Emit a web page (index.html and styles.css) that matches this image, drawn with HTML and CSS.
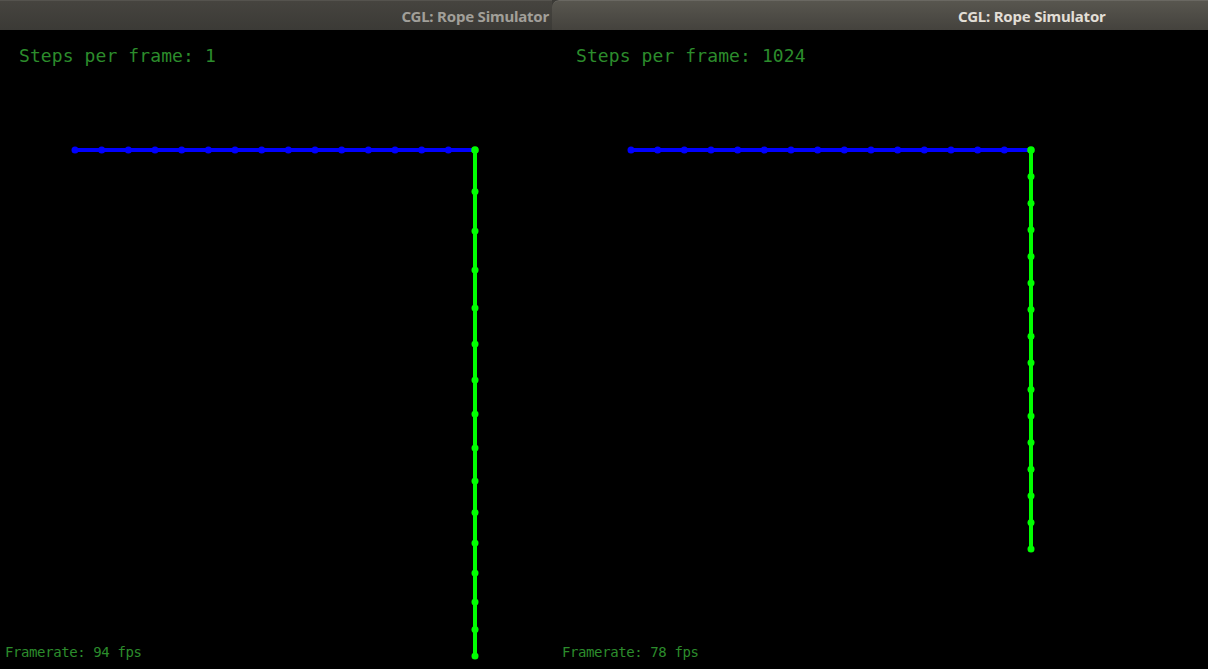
FILE: index.html
```html
<!DOCTYPE html>
<html>
<head>
<meta charset="utf-8">
<title>CGL: Rope Simulator</title>
<link rel="stylesheet" href="styles.css">
</head>
<body>
<div class="desktop">
  <section class="window window-left">
    <header class="titlebar titlebar-inactive"><span class="title">CGL: Rope Simulator</span></header>
    <div class="viewport">
      <svg class="scene" width="552" height="639" viewBox="0 0 552 639">
        <g class="rope-blue">
          <line x1="75" y1="120" x2="475" y2="120"/>
          <circle cx="75" cy="120" r="3.5"/><circle cx="101.67" cy="120" r="3.5"/><circle cx="128.33" cy="120" r="3.5"/><circle cx="155" cy="120" r="3.5"/>
          <circle cx="181.67" cy="120" r="3.5"/><circle cx="208.33" cy="120" r="3.5"/><circle cx="235" cy="120" r="3.5"/><circle cx="261.67" cy="120" r="3.5"/>
          <circle cx="288.33" cy="120" r="3.5"/><circle cx="315" cy="120" r="3.5"/><circle cx="341.67" cy="120" r="3.5"/><circle cx="368.33" cy="120" r="3.5"/>
          <circle cx="395" cy="120" r="3.5"/><circle cx="421.67" cy="120" r="3.5"/><circle cx="448.33" cy="120" r="3.5"/>
        </g>
        <g class="rope-green">
          <line x1="475" y1="120" x2="475" y2="626"/>
          <circle cx="475" cy="120" r="3.8"/><circle cx="475" cy="161.5" r="3.5"/><circle cx="475" cy="201" r="3.5"/><circle cx="475" cy="240" r="3.5"/>
          <circle cx="475" cy="278" r="3.5"/><circle cx="475" cy="314" r="3.5"/><circle cx="475" cy="350" r="3.5"/><circle cx="475" cy="384" r="3.5"/>
          <circle cx="475" cy="418" r="3.5"/><circle cx="475" cy="451" r="3.5"/><circle cx="475" cy="482.5" r="3.5"/><circle cx="475" cy="513" r="3.5"/>
          <circle cx="475" cy="543" r="3.5"/><circle cx="475" cy="572" r="3.5"/><circle cx="475" cy="599.5" r="3.5"/><circle cx="475" cy="626" r="3.5"/>
        </g>
      </svg>
      <div class="hud hud-steps hud-steps-left">Steps per frame: 1</div>
      <div class="hud hud-fps hud-fps-left">Framerate: 94 fps</div>
    </div>
  </section>
  <section class="window window-right">
    <header class="titlebar titlebar-active"><span class="title">CGL: Rope Simulator</span></header>
    <div class="viewport">
      <svg class="scene" width="656" height="639" viewBox="0 0 656 639">
        <g class="rope-blue">
          <line x1="79" y1="120" x2="479" y2="120"/>
          <circle cx="79" cy="120" r="3.5"/><circle cx="105.67" cy="120" r="3.5"/><circle cx="132.33" cy="120" r="3.5"/><circle cx="159" cy="120" r="3.5"/>
          <circle cx="185.67" cy="120" r="3.5"/><circle cx="212.33" cy="120" r="3.5"/><circle cx="239" cy="120" r="3.5"/><circle cx="265.67" cy="120" r="3.5"/>
          <circle cx="292.33" cy="120" r="3.5"/><circle cx="319" cy="120" r="3.5"/><circle cx="345.67" cy="120" r="3.5"/><circle cx="372.33" cy="120" r="3.5"/>
          <circle cx="399" cy="120" r="3.5"/><circle cx="425.67" cy="120" r="3.5"/><circle cx="452.33" cy="120" r="3.5"/>
        </g>
        <g class="rope-green">
          <line x1="479" y1="120" x2="479" y2="519"/>
          <circle cx="479" cy="120" r="3.8"/><circle cx="479" cy="146.6" r="3.5"/><circle cx="479" cy="173.2" r="3.5"/><circle cx="479" cy="199.8" r="3.5"/>
          <circle cx="479" cy="226.4" r="3.5"/><circle cx="479" cy="253" r="3.5"/><circle cx="479" cy="279.6" r="3.5"/><circle cx="479" cy="306.2" r="3.5"/>
          <circle cx="479" cy="332.8" r="3.5"/><circle cx="479" cy="359.4" r="3.5"/><circle cx="479" cy="386" r="3.5"/><circle cx="479" cy="412.6" r="3.5"/>
          <circle cx="479" cy="439.2" r="3.5"/><circle cx="479" cy="465.8" r="3.5"/><circle cx="479" cy="492.4" r="3.5"/><circle cx="479" cy="519" r="3.5"/>
        </g>
      </svg>
      <div class="hud hud-steps hud-steps-right">Steps per frame: 1024</div>
      <div class="hud hud-fps hud-fps-right">Framerate: 78 fps</div>
    </div>
  </section>
</div>
</body>
</html>
```
FILE: styles.css
```css
html, body {
  margin: 0;
  padding: 0;
  background: #000;
  width: 1208px;
  height: 669px;
  overflow: hidden;
}

.desktop {
  display: flex;
  width: 1208px;
  height: 669px;
  background: #3c3b37;
}

.window {
  display: flex;
  flex-direction: column;
  height: 669px;
  overflow: hidden;
}

.window-left {
  width: 552px;
  flex: none;
}

.window-right {
  flex: 1;
  border-top-left-radius: 7px;
}

.titlebar {
  height: 30px;
  flex: none;
  display: flex;
  align-items: center;
  box-sizing: border-box;
  font-family: "Noto Sans", "DejaVu Sans", sans-serif;
  font-weight: bold;
  font-size: 15px;
  white-space: nowrap;
}

.titlebar-inactive {
  justify-content: flex-end;
  padding-right: 3px;
  background: linear-gradient(#46443f, #3b3a36);
  border-top: 1px solid #55534e;
  color: #a19f99;
}

.titlebar-active {
  justify-content: flex-start;
  padding-left: 406px;
  background: linear-gradient(#58564f, #44423d);
  border-top: 1px solid #6a6862;
  border-top-left-radius: 7px;
  color: #e2ded6;
}

.title {
  letter-spacing: -0.2px;
}

.viewport {
  position: relative;
  flex: 1;
  display: flex;
  flex-direction: column;
  background: #000;
}

.scene {
  position: absolute;
  left: 0;
  top: 0;
}

.rope-blue line {
  stroke: #0000ff;
  stroke-width: 4;
}

.rope-blue circle {
  fill: #0000ff;
}

.rope-green line {
  stroke: #00ff00;
  stroke-width: 4;
}

.rope-green circle {
  fill: #00ff00;
}

.hud {
  position: relative;
  color: #2c8c2c;
  font-family: "DejaVu Sans Mono", "Liberation Mono", monospace;
  white-space: nowrap;
}

.hud-steps {
  font-size: 18px;
  line-height: 21px;
  letter-spacing: 0.1px;
  padding-top: 15px;
}

.hud-steps-left { padding-left: 19px; }
.hud-steps-right { padding-left: 24px; }

.hud-fps {
  margin-top: auto;
  font-size: 14px;
  line-height: 16px;
  letter-spacing: -0.4px;
  padding-bottom: 9px;
}

.hud-fps-left { padding-left: 5px; }
.hud-fps-right { padding-left: 10px; }
```
